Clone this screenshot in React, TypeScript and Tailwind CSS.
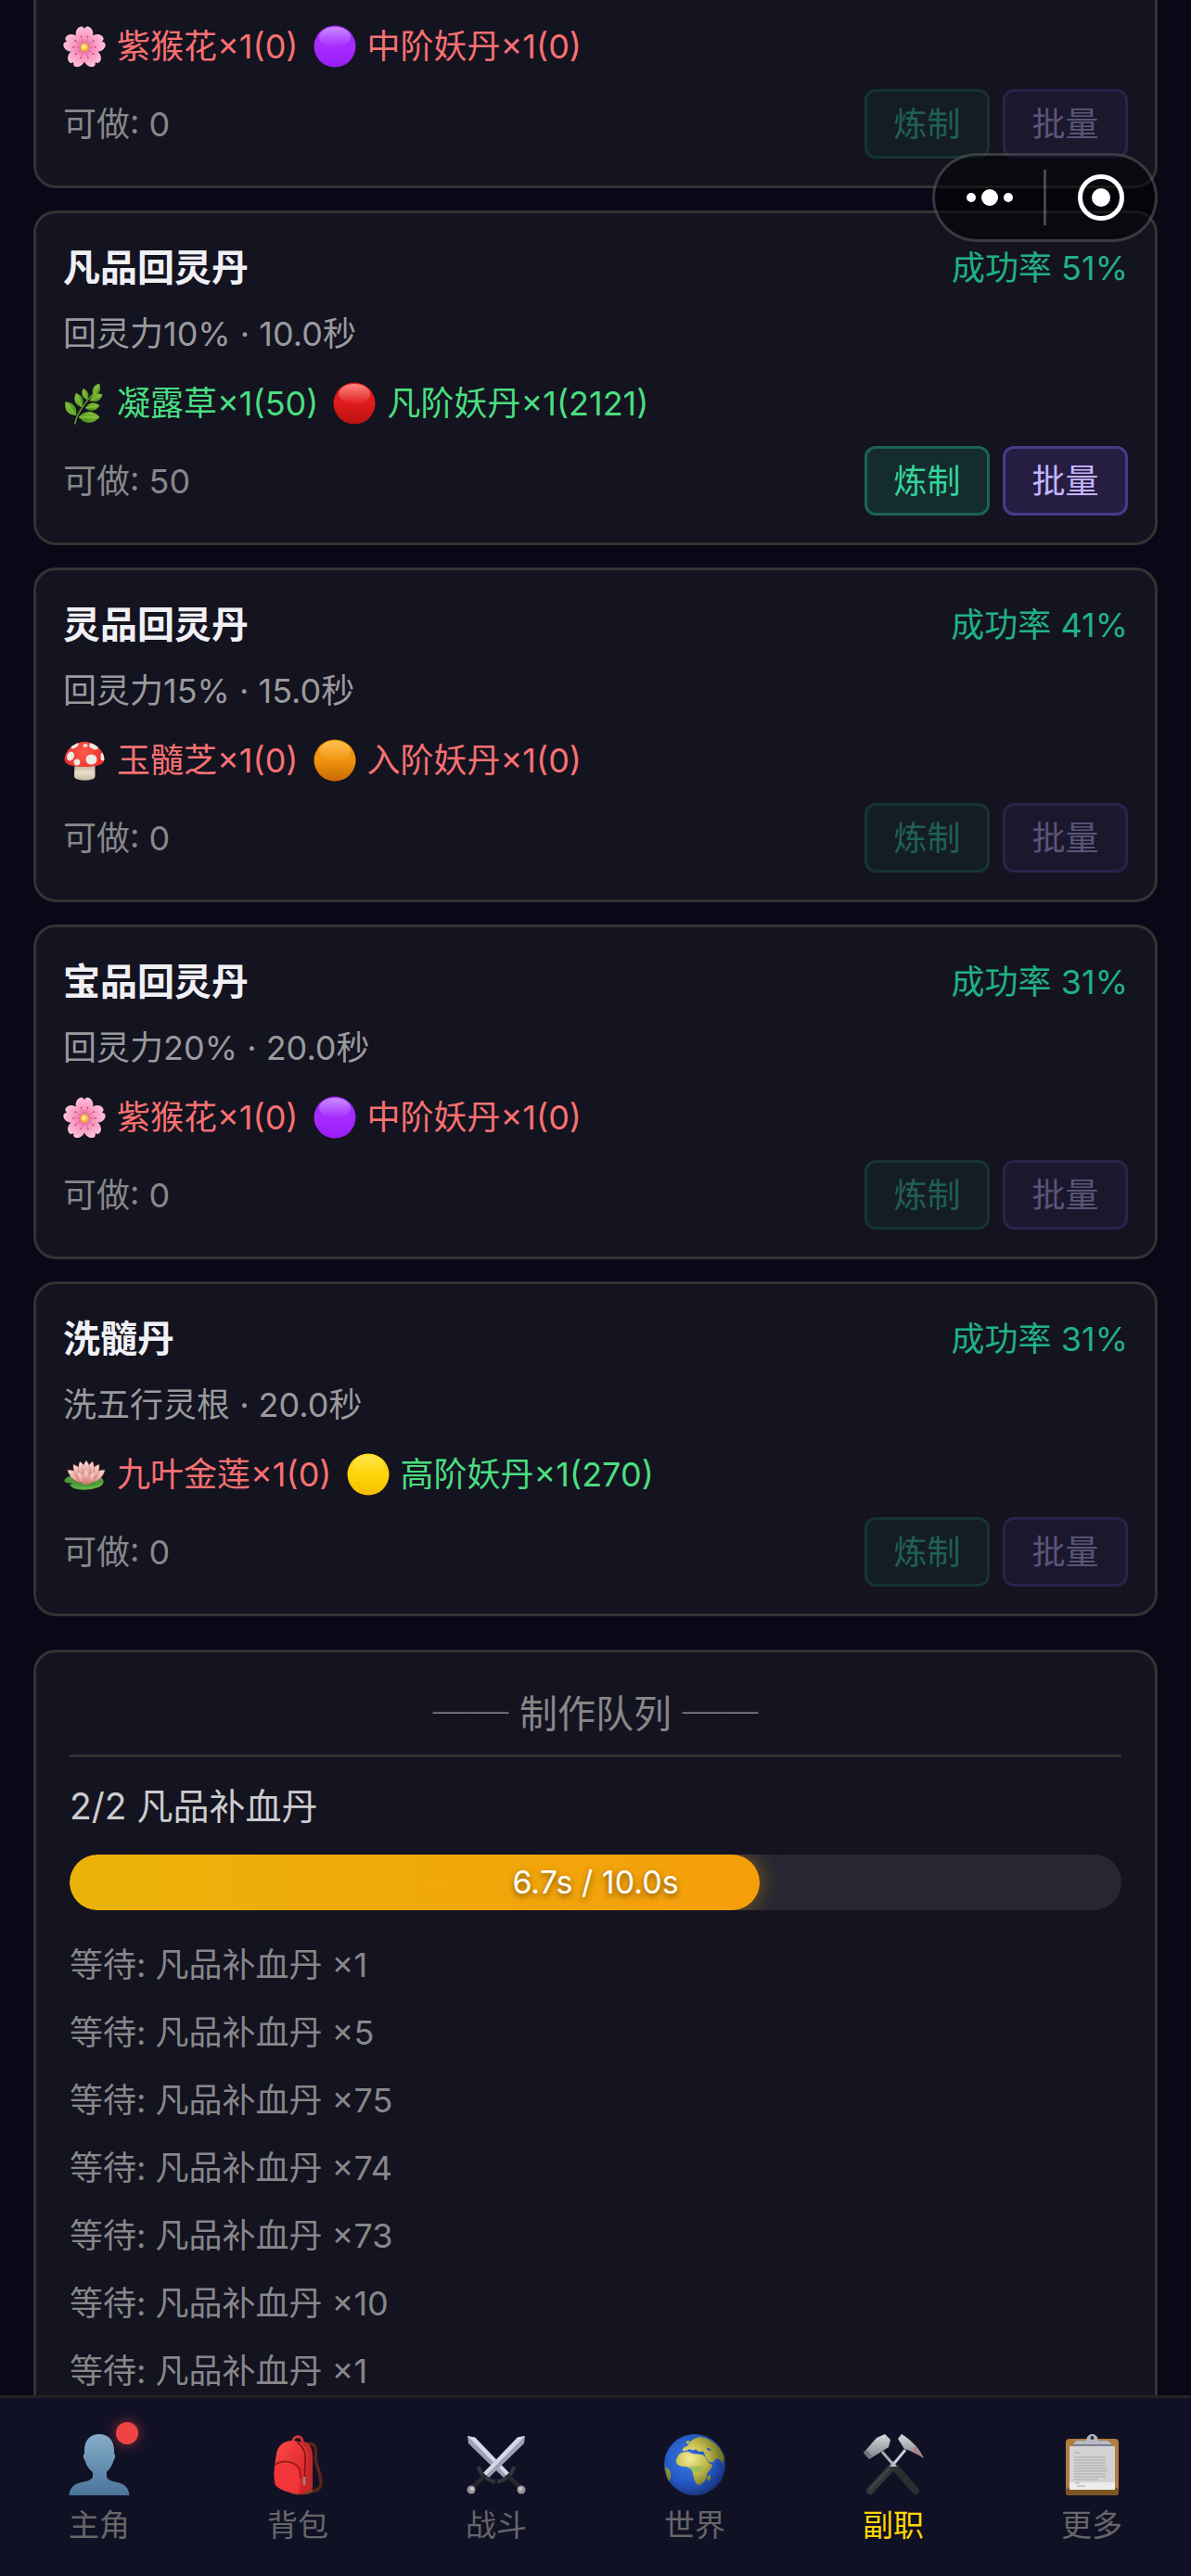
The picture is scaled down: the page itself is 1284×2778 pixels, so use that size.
import type { ReactNode } from 'react';
import clsx from 'clsx';

type IconName = 'flower' | 'herb' | 'mushroom' | 'lotus' | 'purple' | 'red' | 'orange' | 'yellow';

interface Material {
    icon: IconName;
    name: string;
    need: number;
    have: number;
}

interface Recipe {
    name?: string;
    desc?: string;
    rate?: number;
    materials: Material[];
    craftable: number;
}

const RECIPES: Recipe[] = [
    {
        materials: [
            { icon: 'flower', name: '紫猴花', need: 1, have: 0 },
            { icon: 'purple', name: '中阶妖丹', need: 1, have: 0 },
        ],
        craftable: 0,
    },
    {
        name: '凡品回灵丹',
        desc: '回灵力10% · 10.0秒',
        rate: 51,
        materials: [
            { icon: 'herb', name: '凝露草', need: 1, have: 50 },
            { icon: 'red', name: '凡阶妖丹', need: 1, have: 2121 },
        ],
        craftable: 50,
    },
    {
        name: '灵品回灵丹',
        desc: '回灵力15% · 15.0秒',
        rate: 41,
        materials: [
            { icon: 'mushroom', name: '玉髓芝', need: 1, have: 0 },
            { icon: 'orange', name: '入阶妖丹', need: 1, have: 0 },
        ],
        craftable: 0,
    },
    {
        name: '宝品回灵丹',
        desc: '回灵力20% · 20.0秒',
        rate: 31,
        materials: [
            { icon: 'flower', name: '紫猴花', need: 1, have: 0 },
            { icon: 'purple', name: '中阶妖丹', need: 1, have: 0 },
        ],
        craftable: 0,
    },
    {
        name: '洗髓丹',
        desc: '洗五行灵根 · 20.0秒',
        rate: 31,
        materials: [
            { icon: 'lotus', name: '九叶金莲', need: 1, have: 0 },
            { icon: 'yellow', name: '高阶妖丹', need: 1, have: 270 },
        ],
        craftable: 0,
    },
];

const WAITING = [1, 5, 75, 74, 73, 10, 1];

const ORBS: Record<string, [string, string, string]> = {
    purple: ['#c98bff', '#a52bff', '#9a1cf5'],
    red: ['#ff8a80', '#e01b1b', '#b81212'],
    orange: ['#ffc04d', '#f09410', '#c96a00'],
    yellow: ['#ffe64d', '#ffd60a', '#f5bd00'],
};

function Orb({ color }: { color: string }) {
    const [top, mid, bottom] = ORBS[color];
    return (
        <svg viewBox="0 0 46 46" className="size-[46px] shrink-0" aria-hidden="true">
            <defs>
                <linearGradient id={`orb-${color}`} x1="0" y1="0" x2="0" y2="1">
                    <stop offset="0" stopColor={mid} />
                    <stop offset="0.5" stopColor={mid} />
                    <stop offset="1" stopColor={bottom} />
                </linearGradient>
                <linearGradient id={`shine-${color}`} x1="0" y1="0" x2="0" y2="1">
                    <stop offset="0" stopColor={top} />
                    <stop offset="1" stopColor={top} stopOpacity="0" />
                </linearGradient>
            </defs>
            <circle cx="23" cy="23" r="22.5" fill={`url(#orb-${color})`} />
            <ellipse cx="23" cy="13" rx="17" ry="11" fill={`url(#shine-${color})`} />
        </svg>
    );
}

function Flower() {
    return (
        <svg viewBox="0 0 46 46" className="size-[46px] shrink-0" aria-hidden="true">
            <defs>
                <radialGradient id="petal" gradientUnits="userSpaceOnUse" cx="23" cy="24" r="22">
                    <stop offset="0" stopColor="#e0528c" />
                    <stop offset="0.4" stopColor="#f590bb" />
                    <stop offset="1" stopColor="#ffc0d8" />
                </radialGradient>
            </defs>
            {[0, 72, 144, 216, 288].map((a) => (
                <g key={a} transform={`rotate(${a} 23 24)`}>
                    <path
                        d="M23 24 C15 18 11.500 10 15 4.500 C17 1.500 20 .8 21.500 2 L23 4 L24.500 2 C26 .8 29 1.500 31 4.500 C34.500 10 31 18 23 24Z"
                        fill="url(#petal)"
                    />
                    <path d="M23 24 L19.500 13 M23 24 L26.500 13" stroke="#dc5c92" strokeWidth=".6" fill="none" />
                    <circle cx="19.500" cy="12.500" r=".8" fill="#a8305f" />
                    <circle cx="26.500" cy="12.500" r=".8" fill="#a8305f" />
                </g>
            ))}
            <circle cx="23" cy="24" r="4.500" fill="#f0b83a" />
            <circle cx="22.500" cy="23.500" r="2.500" fill="#ffe58a" />
        </svg>
    );
}

function Herb() {
    const leaf = 'M0 0 C-5 -4 -5.500 -10 0 -15 C5.500 -10 5 -4 0 0Z';
    // x, y, angle, scale for every leaf
    const leaves = [
        [14, 36, -38, 1.25],
        [20, 27, -22, 1.1],
        [26, 19, -20, 0.85],
        [33, 15, 24, 0.98],
        [29, 20, 64, 1],
        [24, 28, 80, 1.05],
        [17, 38, 90, 1.5],
    ];
    return (
        <svg viewBox="0 0 46 46" className="size-[46px] shrink-0" aria-hidden="true">
            <defs>
                <linearGradient id="leaf" x1="0" y1="0" x2="1" y2="1">
                    <stop offset="0" stopColor="#8fc93a" />
                    <stop offset="1" stopColor="#3f8a16" />
                </linearGradient>
            </defs>
            <path d="M13 45 C14 35 22 24 34 11" fill="none" stroke="#5f9c25" strokeWidth="1.600" strokeLinecap="round" />
            {leaves.map(([x, y, a, s]) => (
                <g key={`${x}-${y}`} transform={`translate(${x} ${y}) rotate(${a}) scale(${s})`}>
                    <path d={leaf} fill="url(#leaf)" />
                    <path d="M0 0V-12" stroke="#a9d85a" strokeWidth=".6" />
                </g>
            ))}
        </svg>
    );
}

function Mushroom() {
    return (
        <svg viewBox="0 0 46 46" className="size-[46px] shrink-0" aria-hidden="true">
            <defs>
                <linearGradient id="stem" x1="0" y1="0" x2="0" y2="1">
                    <stop offset="0" stopColor="#b9a68b" />
                    <stop offset="0.5" stopColor="#e8dfcd" />
                    <stop offset="1" stopColor="#c9bba3" />
                </linearGradient>
                <radialGradient id="cap" cx=".5" cy=".3" r=".7">
                    <stop offset="0" stopColor="#ff5a4a" />
                    <stop offset="0.7" stopColor="#ea2f2a" />
                    <stop offset="1" stopColor="#b81a1a" />
                </radialGradient>
                <clipPath id="cap-clip">
                    <path d="M23 3 C34 3 44 12 44.500 22 C44.500 28 35 30 23 30 C11 30 1.500 28 1.500 22 C2 12 12 3 23 3Z" />
                </clipPath>
            </defs>
            <path d="M12.500 27 H34.500 L34.500 40 C34.500 43 30 44.500 23.500 44.500 C17 44.500 12 43 12 40Z" fill="url(#stem)" />
            <g clipPath="url(#cap-clip)">
                <rect width="46" height="46" fill="url(#cap)" />
                <g fill="#efeae2">
                    <ellipse cx="12.500" cy="7" rx="4.500" ry="2.500" transform="rotate(-32 12.500 7)" />
                    <ellipse cx="24" cy="7" rx="2.500" ry="1.800" />
                    <ellipse cx="33" cy="8" rx="5" ry="2.800" transform="rotate(25 33 8)" />
                    <ellipse cx="8" cy="18.500" rx="3.800" ry="5" transform="rotate(20 8 18.500)" />
                    <ellipse cx="30.500" cy="22" rx="6" ry="5.500" />
                    <circle cx="15" cy="25" r="3.400" />
                    <ellipse cx="43" cy="19" rx="2.500" ry="4.500" />
                </g>
            </g>
        </svg>
    );
}

function Lotus() {
    const petal = 'M0 0 C-6 -5 -6 -14 0 -22 C6 -14 6 -5 0 0Z';
    return (
        <svg viewBox="0 0 46 46" className="size-[46px] shrink-0" aria-hidden="true">
            <defs>
                <linearGradient id="lotus-petal" x1="0" y1="0" x2="0" y2="1">
                    <stop offset="0" stopColor="#ffe3dc" />
                    <stop offset="0.5" stopColor="#e9aaa3" />
                    <stop offset="1" stopColor="#cf6f6c" />
                </linearGradient>
            </defs>
            <path d="M2 28 C7 23 14 24 20 27 L40 26 C46 29 45 36 34 38 C22 41 10 40 7 34 L10 32 C4 33 0 32 2 28Z" fill="#4c9a38" />
            <path d="M9 34 C20 38 34 37 43 31 C43 36 36 38 30 39 C20 40 10 39 9 34Z" fill="#5fae45" />
            {[-54, 54, -34, 34, -16, 16, 0].map((a) => (
                <g key={a} transform={`translate(25 33) rotate(${a})`}>
                    <path d={petal} fill="url(#lotus-petal)" stroke="#b9625f" strokeWidth=".4" transform="translate(0 -3)" />
                </g>
            ))}
            {[-34, 34, 0].map((a) => (
                <g key={`f${a}`} transform={`translate(25 34) rotate(${a}) scale(.75)`}>
                    <path d={petal} fill="url(#lotus-petal)" stroke="#c97873" strokeWidth=".5" />
                </g>
            ))}
        </svg>
    );
}

function MaterialIcon({ icon }: { icon: IconName }) {
    switch (icon) {
        case 'flower':
            return <Flower />;
        case 'herb':
            return <Herb />;
        case 'mushroom':
            return <Mushroom />;
        case 'lotus':
            return <Lotus />;
        default:
            return <Orb color={icon} />;
    }
}

function PersonIcon() {
    return (
        <svg viewBox="0 0 66 66" className="size-[66px]" aria-hidden="true">
            <defs>
                <linearGradient id="person" x1="0" y1="0" x2="0" y2="1">
                    <stop offset="0" stopColor="#86adc9" />
                    <stop offset="1" stopColor="#4a749b" />
                </linearGradient>
            </defs>
            <path
                d="M33 0 C43 0 49 7 49 17 L49 21 C51 22 50 27 48.500 28 C47.500 33 44 38 41 41 L41 46 C43 51 50 51 56 53 C62 55 65 60 65.500 66 H.5 C1 60 4 55 10 53 C16 51 24 51 26 46 L26 41 C22 38 18.500 33 17.500 28 C16 27 15 22 17 21 L17 17 C17 7 23 0 33 0Z"
                fill="url(#person)"
            />
        </svg>
    );
}

function BackpackIcon() {
    return (
        <svg viewBox="0 0 66 66" className="size-[66px]" aria-hidden="true">
            <defs>
                <linearGradient id="bag" x1="0" y1="0" x2="1" y2="1">
                    <stop offset="0" stopColor="#ff4a45" />
                    <stop offset="1" stopColor="#d01f24" />
                </linearGradient>
            </defs>
            <path d="M42 11 C50 8 54 14 52 24 C51 32 59 42 58 54 C57 60 52 62 46 61" fill="none" stroke="#5c2417" strokeWidth="3.500" />
            <path d="M28 8 C28 1 38 1 38 8" fill="none" stroke="#d33a35" strokeWidth="3" />
            <path d="M34 9 C44 5 50 14 49 28 L49 58 C47 65 34 67 28 64Z" fill="#c3282a" />
            <path d="M38 64 C34 66 28 65 24 64 L50 60 C48 64 43 66 38 64Z" fill="#7a431f" />
            <path d="M10 22 C11 11 20 6 29 7 C39 8 45 16 44 28 L43 62 C36 66 18 63 9 55 C7 44 8 32 10 22Z" fill="url(#bag)" />
            <path d="M32 9 C39 13 42 20 41 30 L40 54" fill="none" stroke="#7d1517" strokeWidth="1.600" />
            <path d="M8 36 C14 30 30 31 34 40 C36 48 35 58 34 64 C24 64 13 60 9 55 C7 49 7 42 8 36Z" fill="#f2353a" />
            <path d="M9 33 C16 27 31 29 35 38 L36 48" fill="none" stroke="#a11a1d" strokeWidth="1.800" />
            <path d="M40 46 V55" stroke="#8a8a90" strokeWidth="2.500" />
        </svg>
    );
}

function SwordsIcon() {
    const sword = (
        <>
            <path d="M1 1 L9 2.500 L46 41 L40 46 L2 9Z" fill="#9da0b2" />
            <path d="M1 1 L9 2.500 L46 41 L43 43.500Z" fill="#d5d9e8" />
            <path d="M33 50 C40 50 50 42 51 34" fill="none" stroke="#33363a" strokeWidth="4" />
            <path d="M44 43 L58 57" stroke="#26282d" strokeWidth="5" />
            <circle cx="59" cy="59" r="4.500" fill="#9a9499" />
            <circle cx="58" cy="58" r="2" fill="#cfcacf" />
        </>
    );
    return (
        <svg viewBox="0 0 66 66" className="size-[66px]" aria-hidden="true">
            <g transform="translate(1 1)">{sword}</g>
            <g transform="translate(65 1) scale(-1 1)">{sword}</g>
        </svg>
    );
}

function GlobeIcon() {
    return (
        <svg viewBox="0 0 66 66" className="size-[66px]" aria-hidden="true">
            <defs>
                <radialGradient id="sea" cx=".4" cy=".4" r=".62">
                    <stop offset="0" stopColor="#3b7ae0" />
                    <stop offset="0.65" stopColor="#2458c4" />
                    <stop offset="1" stopColor="#1b3580" />
                </radialGradient>
                <radialGradient id="land" gradientUnits="userSpaceOnUse" cx="28" cy="26" r="34">
                    <stop offset="0" stopColor="#f2ec9a" />
                    <stop offset="0.5" stopColor="#c6bd4c" />
                    <stop offset="1" stopColor="#6f7426" />
                </radialGradient>
                <clipPath id="globe-clip">
                    <circle cx="33" cy="33" r="33" />
                </clipPath>
            </defs>
            <circle cx="33" cy="33" r="33" fill="url(#sea)" />
            <g clipPath="url(#globe-clip)" fill="url(#land)">
                <path d="M19 20 C24 18 28 19 30 21 C35 22 41 21 44 24 C46 28 48 32 52 33 C52 37 47 40 46 44 C46 50 41 54 37 55 C33 53 32 48 31 42 C30 38 27 35 22 35 C16 35 12 32 13 28 C14 24 16 21 19 20Z" />
                <path d="M20 18 C19 14 23 14 25 13 C26 9 32 4 38 3 C48 3 62 13 65 25 L63 32 C60 26 57 26 55 27 C53 32 50 31 47 28 C44 24 44 20 42 19 C37 20 36 18 34 16 C31 19 29 16 27 16 C25 18 23 18 20 18Z" />
                <path d="M45 22 C49 22 53 24 54 28 C52 31 49 31 47 28Z" />
                <path d="M47 45 C50 43 51 46 49 50 C47 51 46 48 47 45Z" />
                <path d="M1 35 C5 37 8 40 7 46 C7 50 5 52 3 50Z" />
                <path d="M24 8 C26 6 28 7 27 9 C25 11 23 11 24 8Z" />
            </g>
            <path d="M27 34 C32 36 38 33 42 35 C43 39 37 42 32 41Z" fill="#8dbb5c" opacity=".75" />
            <path d="M30 17 C34 20 39 18 43 19 L42 21 C37 22 32 21 30 17Z M46 15 C49 15 51 16 50 18 C48 18 46 17 46 15Z" fill="#2458c4" />
        </svg>
    );
}

function HammersIcon() {
    return (
        <svg viewBox="0 0 66 66" className="size-[66px]" aria-hidden="true">
            <defs>
                <linearGradient id="steel" x1="0" y1="0" x2="0" y2="1">
                    <stop offset="0" stopColor="#d8dade" />
                    <stop offset="1" stopColor="#7c8086" />
                </linearGradient>
            </defs>
            <path d="M21 19 L34 34" stroke="#a9acb4" strokeWidth="3" />
            <path d="M46 17 L32 34" stroke="#c9ccd4" strokeWidth="3" />
            <path d="M35 36 L57 61" stroke="#2b2d2f" strokeWidth="8" strokeLinecap="round" />
            <path d="M31 36 L8 61" stroke="#343638" strokeWidth="8" strokeLinecap="round" />
            <path d="M29 37 L8 59" stroke="#4a4c4e" strokeWidth="1.500" strokeLinecap="round" />
            <path d="M33 29 L37 35 H29Z" fill="#b9bcc4" />
            <path d="M1 20 L15 4 L24 0 L30 6 L28 14 L17 21 L7 27Z" fill="url(#steel)" />
            <path d="M1 20 L4 17 L10 23 L7 27Z" fill="#70747a" />
            <path d="M38 5 L42 0 C50 5 61 14 66 26 C60 22 52 18 45 16Z" fill="url(#steel)" />
            <path d="M57 12 L66 26 C62 23 57 21 53 19Z" fill="#b07c7c" opacity=".7" />
        </svg>
    );
}

function ClipboardIcon() {
    return (
        <svg viewBox="0 0 66 66" className="size-[66px]" aria-hidden="true">
            <rect x="5" y="5" width="57" height="61" rx="4" fill="#b17e3e" />
            <rect x="5" y="58" width="57" height="8" rx="3" fill="#7f5624" />
            <path d="M9 13 H58 V60 H9Z" fill="#d3d3d5" />
            <path d="M9 52 H58 V60 H9Z" fill="#ececec" />
            <path
                d="M14 20 H21 M14 25 H48 M14 28 H48 M14 31 H48 M14 34 H48 M14 37 H50 M14 40 H49 M14 43 H48 M14 46 H48 M14 49 H40 M15 53 H20 M17 56 H26"
                stroke="#a9a9ad"
                strokeWidth="1"
            />
            <path d="M13 13 C13 8 16 7 20 7 H27 C28 2 30 0 33.500 0 C37 0 39 2 40 7 H47 C51 7 54 8 54 13Z" fill="#b6b8c8" />
            <path d="M13 12 H54" stroke="#7d7f8c" strokeWidth="2" />
            <circle cx="33.500" cy="4" r="2" fill="#2a2a38" />
        </svg>
    );
}

interface NavItem {
    label: string;
    icon: ReactNode;
    active?: boolean;
    badge?: boolean;
}

const NAV: NavItem[] = [
    { label: '主角', icon: <PersonIcon />, badge: true },
    { label: '背包', icon: <BackpackIcon /> },
    { label: '战斗', icon: <SwordsIcon /> },
    { label: '世界', icon: <GlobeIcon /> },
    { label: '副职', icon: <HammersIcon />, active: true },
    { label: '更多', icon: <ClipboardIcon /> },
];

function RecipeCard({ recipe }: { recipe: Recipe }) {
    const disabled = recipe.craftable === 0;

    return (
        <section
            className={clsx(
                'shrink-0 border-[3px] border-[#333333] bg-[#141320] px-[29px] pb-[29px]',
                recipe.name ? 'rounded-3xl pt-[29px]' : 'rounded-b-3xl border-t-0 pt-[23px]'
            )}
        >
            {recipe.name && (
                <>
                    <div className="flex items-center justify-between leading-[60px]">
                        <h2 className="text-[40px] font-bold text-[#f0f0f5]">{recipe.name}</h2>
                        <span className="text-[36px] text-[#1fb184]">成功率 {recipe.rate}%</span>
                    </div>
                    <p className="mt-[14px] text-[36px] leading-[54px] text-[#9a9a9e]">{recipe.desc}</p>
                </>
            )}
            <div className={clsx('flex gap-4', recipe.name && 'mt-[21px]')}>
                {recipe.materials.map((m) => (
                    <span
                        key={m.name}
                        className={clsx(
                            'flex items-center gap-3 text-[36px] leading-[54px]',
                            m.have >= m.need ? 'text-[#4ade80]' : 'text-[#f87171]'
                        )}
                    >
                        <MaterialIcon icon={m.icon} />
                        {m.name}×{m.need}({m.have})
                    </span>
                ))}
            </div>
            <div className="mt-[19px] flex items-center justify-between">
                <span className="text-[36px] leading-[54px] text-[#87878a]">可做: {recipe.craftable}</span>
                <div className="flex gap-[14px]">
                    <button
                        type="button"
                        disabled={disabled}
                        className="h-[75px] w-[135px] rounded-xl border-[3px] border-[#1b6354] bg-[#142c2d] text-[36px] text-[#34d399] disabled:opacity-40"
                    >
                        炼制
                    </button>
                    <button
                        type="button"
                        disabled={disabled}
                        className="h-[75px] w-[135px] rounded-xl border-[3px] border-[#4b3a8a] bg-[#261e42] text-[36px] text-[#c4b5fd] disabled:opacity-40"
                    >
                        批量
                    </button>
                </div>
            </div>
        </section>
    );
}

function CraftQueue() {
    const elapsed = 6.7;
    const total = 10;
    const percent = ((elapsed - 0.14) / total) * 100;

    return (
        <section className="mt-9 shrink-0 rounded-3xl border-[3px] border-[#333333] bg-[#141320] p-9">
            <h2 className="border-b-[3px] border-[#333333] pb-[14px] text-center text-[41px] leading-[60px] text-[#87878a]">
                <span className="font-bold">──</span> 制作队列 <span className="font-bold">──</span>
            </h2>
            <p className="mt-[26px] text-[39px] leading-[54px] text-[#cccccf]">2/2 凡品补血丹</p>
            <div className="relative mt-[25px] h-[60px] overflow-hidden rounded-full bg-[#272632]">
                <div
                    className="h-full rounded-full bg-linear-to-r from-[#eab308] to-[#f59e0b] shadow-[0_0_24px_rgba(234,179,8,0.45)]"
                    style={{ width: `${percent}%` }}
                />
                <span className="absolute inset-0 text-center text-[34px] leading-[60px] text-white [text-shadow:0_3px_6px_rgba(0,0,0,0.5)]">
                    {elapsed.toFixed(1)}s / {total.toFixed(1)}s
                </span>
            </div>
            <ul className="mt-8 flex flex-col gap-[19px] text-[36px] leading-[54px] text-[#87878a]">
                {WAITING.map((count, i) => (
                    <li key={i}>等待: 凡品补血丹 ×{count}</li>
                ))}
            </ul>
        </section>
    );
}

export default function App() {
    return (
        <div className="flex h-screen flex-col overflow-hidden bg-[#090817] font-['Inter','Noto_Sans_CJK_SC',sans-serif]">
            <main className="flex min-h-0 flex-1 flex-col overflow-hidden px-9">
                <div className="flex shrink-0 flex-col gap-6">
                    {RECIPES.map((recipe, i) => (
                        <RecipeCard key={i} recipe={recipe} />
                    ))}
                </div>
                <CraftQueue />
            </main>

            <nav className="grid shrink-0 grid-cols-6 border-t-[3px] border-[#222228] bg-[#111126] pt-[39px] pb-8">
                {NAV.map((item) => (
                    <button key={item.label} type="button" className="flex flex-col items-center gap-[9px]">
                        <span className="relative">
                            {item.icon}
                            {item.badge && (
                                <span className="absolute -top-[13px] -right-[9px] size-6 rounded-full bg-[#ef4444] shadow-[0_0_14px_rgba(239,68,68,0.6)]" />
                            )}
                        </span>
                        <span className={clsx('text-[33px] leading-[46px]', item.active ? 'text-[#ffd700]' : 'text-[#666668]')}>
                            {item.label}
                        </span>
                    </button>
                ))}
            </nav>

            {/* host app capsule, floats over the page */}
            <div className="fixed top-[165px] right-9 flex h-24 w-[243px] items-center rounded-full border-[3px] border-white/20 bg-black/50">
                <button type="button" aria-label="更多操作" className="flex flex-1 items-center justify-center gap-[6px]">
                    <span className="size-[10px] rounded-full bg-white" />
                    <span className="size-[18px] rounded-full bg-white" />
                    <span className="size-[10px] rounded-full bg-white" />
                </button>
                <span className="h-[60px] w-[3px] bg-white/25" />
                <button type="button" aria-label="关闭" className="flex flex-1 items-center justify-center">
                    <span className="flex size-[50px] items-center justify-center rounded-full border-[5px] border-white">
                        <span className="size-5 rounded-full bg-white" />
                    </span>
                </button>
            </div>
        </div>
    );
}
